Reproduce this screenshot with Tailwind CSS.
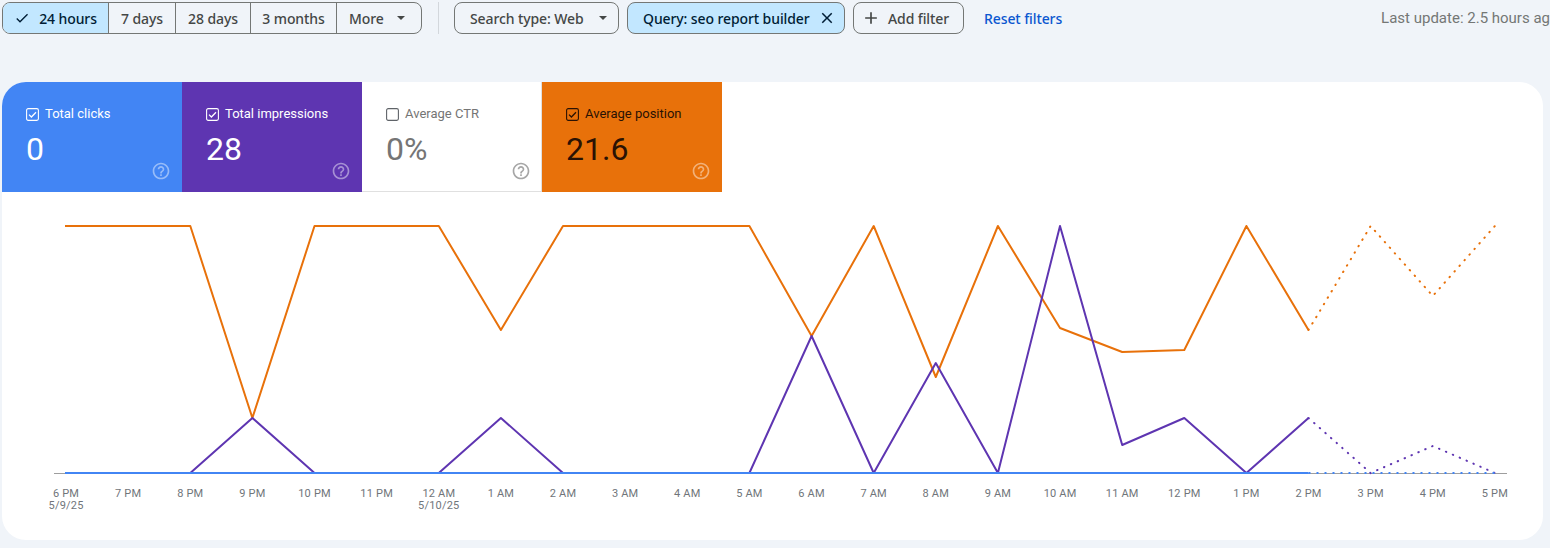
<!DOCTYPE html>
<html lang="en">
<head>
  <meta charset="UTF-8" />
  <title>Performance</title>
  <script src="https://cdn.jsdelivr.net/npm/@tailwindcss/browser@4"></script>
</head>
<body class="bg-[#f0f4f9] h-[548px] overflow-hidden font-['Roboto',sans-serif]">

  <!-- Filter bar -->
  <div class="flex items-center h-[32px] mt-[2px] ml-[2px] w-[1600px] text-[14px] font-medium text-[#444746] font-['Noto_Sans','Roboto',sans-serif] tracking-[-0.1px]">
    <div class="flex h-[32px] w-[420px] border border-[#747775] rounded-lg overflow-hidden">
      <div class="flex items-center justify-center gap-[9px] w-[106px] bg-[#c2e7ff] text-[#001d35] border-r border-[#747775]">
        <svg class="w-[16px] h-[16px]" viewBox="0 0 24 24" fill="#001d35"><path d="M9 16.17 4.83 12l-1.42 1.41L9 19 21 7l-1.41-1.41z"/></svg>
        <span>24 hours</span>
      </div>
      <div class="flex items-center justify-center w-[67px] border-r border-[#747775]">7 days</div>
      <div class="flex items-center justify-center w-[75px] border-r border-[#747775]">28 days</div>
      <div class="flex items-center justify-center w-[86px] border-r border-[#747775]">3 months</div>
      <div class="flex items-center flex-1 pl-[12px] gap-[13px]">
        <span>More</span>
        <span class="w-0 h-0 border-x-[4px] border-x-transparent border-t-[4px] border-t-[#444746]"></span>
      </div>
    </div>
    <div class="w-px h-[32px] bg-[#d3d7dc] ml-[16px]"></div>
    <div class="flex items-center justify-between w-[165px] h-[32px] ml-[15px] pl-[15px] pr-[11px] border border-[#747775] rounded-lg">
      <span>Search type: Web</span>
      <span class="w-0 h-0 border-x-[4px] border-x-transparent border-t-[4px] border-t-[#444746]"></span>
    </div>
    <div class="flex items-center justify-between w-[218px] h-[32px] ml-[8px] pl-[15px] pr-[8px] bg-[#c2e7ff] text-[#001d35] border border-[#747775] rounded-lg">
      <span>Query: seo report builder</span>
      <svg class="w-[18px] h-[18px]" viewBox="0 0 24 24" fill="#001d35"><path d="M19 6.41 17.59 5 12 10.59 6.41 5 5 6.41 10.59 12 5 17.59 6.41 19 12 13.41 17.59 19 19 17.59 13.41 12z"/></svg>
    </div>
    <div class="flex items-center gap-[7px] w-[111px] h-[32px] ml-[8px] pl-[7px] border border-[#747775] rounded-lg">
      <svg class="w-[20px] h-[20px]" viewBox="0 0 24 24" fill="#444746"><path d="M19 13h-6v6h-2v-6H5v-2h6V5h2v6h6z"/></svg>
      <span>Add filter</span>
    </div>
    <a class="ml-[20px] text-[#0b57d0] whitespace-nowrap">Reset filters</a>
    <span class="ml-[319px] text-[#747775] text-[15px] font-normal font-['Roboto',sans-serif] tracking-normal whitespace-nowrap">Last update: 2.5 hours ago</span>
  </div>

  <!-- Performance card -->
  <div class="w-[1541px] h-[458px] ml-[2px] mt-[48px] bg-white rounded-[24px] overflow-hidden">
    <div class="flex h-[110px] text-[13px]">
      <div class="flex flex-col w-[180px] pl-[24px] pt-[25px] bg-[#4285f4] text-white">
        <div class="flex items-center gap-[6px] h-[14px]">
          <svg class="w-[13px] h-[13px]" viewBox="0 0 13 13" fill="none" stroke="#fff"><rect x=".6" y=".6" width="11.8" height="11.8" rx="1.6" stroke-width="1.1"/><path d="M3 6.6l2.4 2.4L10 4.3" stroke-width="1.3"/></svg>
          <span>Total clicks</span>
        </div>
        <div class="text-[32px] leading-[34px] mt-[11px]">0</div>
        <svg class="shrink-0 self-end -mt-[5px] mr-[11px] w-[20px] h-[20px]" viewBox="0 0 24 24" fill="#fff" fill-opacity=".45"><path d="M11 18h2v-2h-2v2zm1-16C6.48 2 2 6.48 2 12s4.48 10 10 10 10-4.48 10-10S17.52 2 12 2zm0 18c-4.41 0-8-3.59-8-8s3.59-8 8-8 8 3.59 8 8-3.59 8-8 8zm0-14c-2.21 0-4 1.79-4 4h2c0-1.1.9-2 2-2s2 .9 2 2c0 2-3 1.75-3 5h2c0-2.25 3-2.5 3-5 0-2.21-1.79-4-4-4z"/></svg>
      </div>
      <div class="flex flex-col w-[180px] pl-[24px] pt-[25px] bg-[#5e35b1] text-white">
        <div class="flex items-center gap-[6px] h-[14px]">
          <svg class="w-[13px] h-[13px]" viewBox="0 0 13 13" fill="none" stroke="#fff"><rect x=".6" y=".6" width="11.8" height="11.8" rx="1.6" stroke-width="1.1"/><path d="M3 6.6l2.4 2.4L10 4.3" stroke-width="1.3"/></svg>
          <span>Total impressions</span>
        </div>
        <div class="text-[32px] leading-[34px] mt-[11px]">28</div>
        <svg class="shrink-0 self-end -mt-[5px] mr-[11px] w-[20px] h-[20px]" viewBox="0 0 24 24" fill="#fff" fill-opacity=".45"><path d="M11 18h2v-2h-2v2zm1-16C6.48 2 2 6.48 2 12s4.48 10 10 10 10-4.48 10-10S17.52 2 12 2zm0 18c-4.41 0-8-3.59-8-8s3.59-8 8-8 8 3.59 8 8-3.59 8-8 8zm0-14c-2.21 0-4 1.79-4 4h2c0-1.1.9-2 2-2s2 .9 2 2c0 2-3 1.75-3 5h2c0-2.25 3-2.5 3-5 0-2.21-1.79-4-4-4z"/></svg>
      </div>
      <div class="flex flex-col w-[180px] pl-[24px] pt-[25px] bg-white text-[#757575] border-b border-r border-[#e0e0e0]">
        <div class="flex items-center gap-[6px] h-[14px]">
          <svg class="w-[13px] h-[13px]" viewBox="0 0 13 13" fill="none" stroke="#5f6368"><rect x=".6" y=".6" width="11.8" height="11.8" rx="1.6" stroke-width="1.1"/></svg>
          <span>Average CTR</span>
        </div>
        <div class="text-[32px] leading-[34px] mt-[11px]">0%</div>
        <svg class="shrink-0 self-end -mt-[5px] mr-[10px] w-[20px] h-[20px]" viewBox="0 0 24 24" fill="#000" fill-opacity=".35"><path d="M11 18h2v-2h-2v2zm1-16C6.48 2 2 6.48 2 12s4.48 10 10 10 10-4.48 10-10S17.52 2 12 2zm0 18c-4.41 0-8-3.59-8-8s3.59-8 8-8 8 3.59 8 8-3.59 8-8 8zm0-14c-2.21 0-4 1.79-4 4h2c0-1.1.9-2 2-2s2 .9 2 2c0 2-3 1.75-3 5h2c0-2.25 3-2.5 3-5 0-2.21-1.79-4-4-4z"/></svg>
      </div>
      <div class="flex flex-col w-[180px] pl-[24px] pt-[25px] bg-[#e8710a] text-[#2a1204]">
        <div class="flex items-center gap-[6px] h-[14px]">
          <svg class="w-[13px] h-[13px]" viewBox="0 0 13 13" fill="none" stroke="#2a1204"><rect x=".6" y=".6" width="11.8" height="11.8" rx="1.6" stroke-width="1.1"/><path d="M3 6.6l2.4 2.4L10 4.3" stroke-width="1.3"/></svg>
          <span>Average position</span>
        </div>
        <div class="text-[32px] leading-[34px] mt-[11px]">21.6</div>
        <svg class="shrink-0 self-end -mt-[5px] mr-[11px] w-[20px] h-[20px]" viewBox="0 0 24 24" fill="#fff" fill-opacity=".45"><path d="M11 18h2v-2h-2v2zm1-16C6.48 2 2 6.48 2 12s4.48 10 10 10 10-4.48 10-10S17.52 2 12 2zm0 18c-4.41 0-8-3.59-8-8s3.59-8 8-8 8 3.59 8 8-3.59 8-8 8zm0-14c-2.21 0-4 1.79-4 4h2c0-1.1.9-2 2-2s2 .9 2 2c0 2-3 1.75-3 5h2c0-2.25 3-2.5 3-5 0-2.21-1.79-4-4-4z"/></svg>
      </div>
    </div>

    <!-- Chart, drawn in page coordinates -->
    <svg class="block w-[1541px] h-[290px]" viewBox="2 192 1541 290" fill="none">
      <path d="M54 473.5H1507" stroke="#9e9e9e"/>
      <polyline stroke="#e8710a" stroke-width="2" stroke-linejoin="round" points="65,226 190.3,226 252.4,418 314.5,226 438.8,226 500.9,330 563,226 749.4,226 811.6,336 873.7,226 935.8,377 997.9,226 1060,328 1122.2,352 1184.3,350 1246.4,226 1308.5,330"/>
      <polyline stroke="#e8710a" stroke-width="2" stroke-linecap="round" stroke-dasharray="0.5 7" points="1308.5,330 1370.6,226 1432.8,296 1494.9,226"/>
      <polyline stroke="#5e35b1" stroke-width="2" stroke-linejoin="round" points="65,473 190.3,473 252.4,418 314.5,473 438.8,473 500.9,418 563,473 749.4,473 811.6,336 873.7,473 935.8,363 997.9,473 1060,226 1122.2,445 1184.3,418 1246.4,473 1308.5,418"/>
      <polyline stroke="#5e35b1" stroke-width="2" stroke-linecap="round" stroke-dasharray="0.5 7" points="1308.5,418 1370.6,473 1432.8,446 1494.9,473"/>
      <path d="M65 473H1308.5" stroke="#4285f4" stroke-width="2"/>
      <path d="M1308.5 473H1495" stroke="#4285f4" stroke-width="2" stroke-dasharray="2 6"/>
    </svg>

    <!-- X axis labels -->
    <div class="grid grid-cols-[repeat(24,62.13px)] ml-[33px] mt-[6px] text-[11px] leading-[12px] tracking-[0.2px] text-center text-[#70757a]">
      <div>6 PM<br>5/9/25</div><div>7 PM</div><div>8 PM</div><div>9 PM</div><div>10 PM</div><div>11 PM</div>
      <div>12 AM<br>5/10/25</div><div>1 AM</div><div>2 AM</div><div>3 AM</div><div>4 AM</div><div>5 AM</div>
      <div>6 AM</div><div>7 AM</div><div>8 AM</div><div>9 AM</div><div>10 AM</div><div>11 AM</div>
      <div>12 PM</div><div>1 PM</div><div>2 PM</div><div>3 PM</div><div>4 PM</div><div>5 PM</div>
    </div>
  </div>
</body>
</html>
